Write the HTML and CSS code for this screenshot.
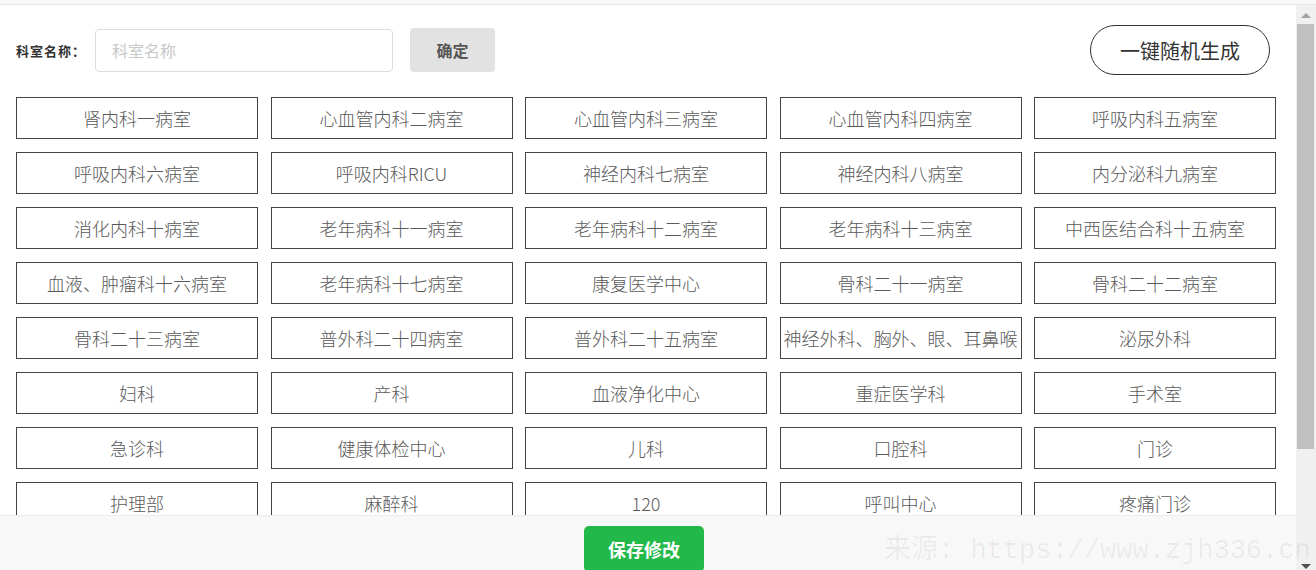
FILE: index.html
```html
<!DOCTYPE html>
<html lang="zh-CN">
<head>
    <meta charset="UTF-8">
    <meta name="viewport" content="width=device-width, initial-scale=1.0">
    <title>科室设置</title>
    <link rel="stylesheet" href="styles.css">
</head>
<body>
    <div class="topbar"></div>

    <div class="frame">
        <div class="panel">
            <div class="content">
                <div class="search-row">
                    <label class="search-label">科室名称：</label>
                    <input class="search-input" type="text" placeholder="科室名称">
                    <button class="btn-confirm">确定</button>
                    <button class="btn-random">一键随机生成</button>
                </div>

                <div class="dept-grid">
                    <div class="dept">肾内科一病室</div>
                    <div class="dept">心血管内科二病室</div>
                    <div class="dept">心血管内科三病室</div>
                    <div class="dept">心血管内科四病室</div>
                    <div class="dept">呼吸内科五病室</div>

                    <div class="dept">呼吸内科六病室</div>
                    <div class="dept">呼吸内科RICU</div>
                    <div class="dept">神经内科七病室</div>
                    <div class="dept">神经内科八病室</div>
                    <div class="dept">内分泌科九病室</div>

                    <div class="dept">消化内科十病室</div>
                    <div class="dept">老年病科十一病室</div>
                    <div class="dept">老年病科十二病室</div>
                    <div class="dept">老年病科十三病室</div>
                    <div class="dept">中西医结合科十五病室</div>

                    <div class="dept">血液、肿瘤科十六病室</div>
                    <div class="dept">老年病科十七病室</div>
                    <div class="dept">康复医学中心</div>
                    <div class="dept">骨科二十一病室</div>
                    <div class="dept">骨科二十二病室</div>

                    <div class="dept">骨科二十三病室</div>
                    <div class="dept">普外科二十四病室</div>
                    <div class="dept">普外科二十五病室</div>
                    <div class="dept">神经外科、胸外、眼、耳鼻喉</div>
                    <div class="dept">泌尿外科</div>

                    <div class="dept">妇科</div>
                    <div class="dept">产科</div>
                    <div class="dept">血液净化中心</div>
                    <div class="dept">重症医学科</div>
                    <div class="dept">手术室</div>

                    <div class="dept">急诊科</div>
                    <div class="dept">健康体检中心</div>
                    <div class="dept">儿科</div>
                    <div class="dept">口腔科</div>
                    <div class="dept">门诊</div>

                    <div class="dept">护理部</div>
                    <div class="dept">麻醉科</div>
                    <div class="dept">120</div>
                    <div class="dept">呼叫中心</div>
                    <div class="dept">疼痛门诊</div>
                </div>
            </div>

            <div class="footer">
                <button class="btn-save">保存修改</button>
            </div>
        </div>

        <div class="scrollbar">
            <div class="arrow-up"></div>
            <div class="thumb"></div>
            <div class="arrow-down"></div>
        </div>
    </div>

    <div class="watermark">来源: https://www.zjh336.cn</div>
</body>
</html>
```

FILE: styles.css
```css
body {
    margin: 0;
    font-family: "Noto Sans CJK SC", "Liberation Sans", sans-serif;
    color: #333;
    background: #fff;
    overflow: hidden;
}

.topbar {
    height: 4px;
    background: #f7f7f7;
    border-bottom: 1px solid #e8e8e8;
}

.frame {
    display: flex;
    height: 565px;
}

.panel {
    flex: 1;
    display: flex;
    flex-direction: column;
    overflow: hidden;
}

.content {
    flex: 1;
    overflow: hidden;
}

/* fake scrollbar */
.scrollbar {
    width: 20px;
    background: #f0f0f0;
    display: flex;
    flex-direction: column;
    align-items: center;
}

.arrow-up {
    margin-top: 8px;
    width: 0;
    height: 0;
    border-left: 5px solid transparent;
    border-right: 5px solid transparent;
    border-bottom: 5px solid #a3a3a3;
}

.thumb {
    margin: 6px 1px 0 0;
    width: 17px;
    height: 425px;
    background: #c0c0c0;
}

.arrow-down {
    margin-top: auto;
    margin-bottom: 1px;
    width: 0;
    height: 0;
    border-left: 5px solid transparent;
    border-right: 5px solid transparent;
    border-top: 5px solid #505050;
}

.search-row {
    display: flex;
    align-items: center;
    height: 50px;
    padding: 20px 26px 0 16px;
}

.search-label {
    font-size: 13px;
    font-weight: bold;
    color: #333;
    letter-spacing: 1px;
    margin-right: 9px;
}

.search-input {
    width: 298px;
    height: 43px;
    box-sizing: border-box;
    border: 1px solid #dcdcdc;
    border-radius: 4px;
    padding: 0 16px;
    font-family: inherit;
    font-size: 16px;
    color: #333;
    outline: none;
}

.search-input::placeholder {
    color: #c8c8c8;
}

.btn-confirm {
    margin-left: 17px;
    width: 85px;
    height: 44px;
    border: none;
    border-radius: 4px;
    background: #e2e2e2;
    font-family: inherit;
    font-size: 16px;
    font-weight: bold;
    color: #555;
}

.btn-random {
    margin-left: auto;
    width: 180px;
    height: 50px;
    border: 1px solid #333;
    border-radius: 25px;
    background: #fff;
    font-family: inherit;
    font-size: 20px;
    color: #333;
}

.dept-grid {
    display: grid;
    grid-template-columns: repeat(5, 1fr);
    column-gap: 12.5px;
    row-gap: 13px;
    padding: 0 20px 0 16px;
    margin-top: 22px;
}

.dept {
    height: 42px;
    box-sizing: border-box;
    border: 1px solid #444;
    display: flex;
    align-items: center;
    justify-content: center;
    font-size: 18px;
    font-weight: 300;
    color: #5a5a5a;
    white-space: nowrap;
}

.footer {
    height: 55px;
    box-sizing: border-box;
    background: #f8f8f8;
    border-top: 1px solid #ececec;
    display: flex;
    justify-content: center;
    padding: 10px 8px 0 0;
}

.btn-save {
    width: 120px;
    height: 46px;
    border: none;
    border-radius: 5px;
    background: #22b94a;
    font-family: inherit;
    font-size: 18px;
    font-weight: bold;
    color: #fff;
}

.watermark {
    position: absolute;
    left: 884px;
    top: 527px;
    font-family: "Liberation Mono", "Noto Sans CJK SC", monospace;
    font-size: 27px;
    color: rgba(0, 0, 0, 0.06);
    white-space: nowrap;
    pointer-events: none;
}
```
